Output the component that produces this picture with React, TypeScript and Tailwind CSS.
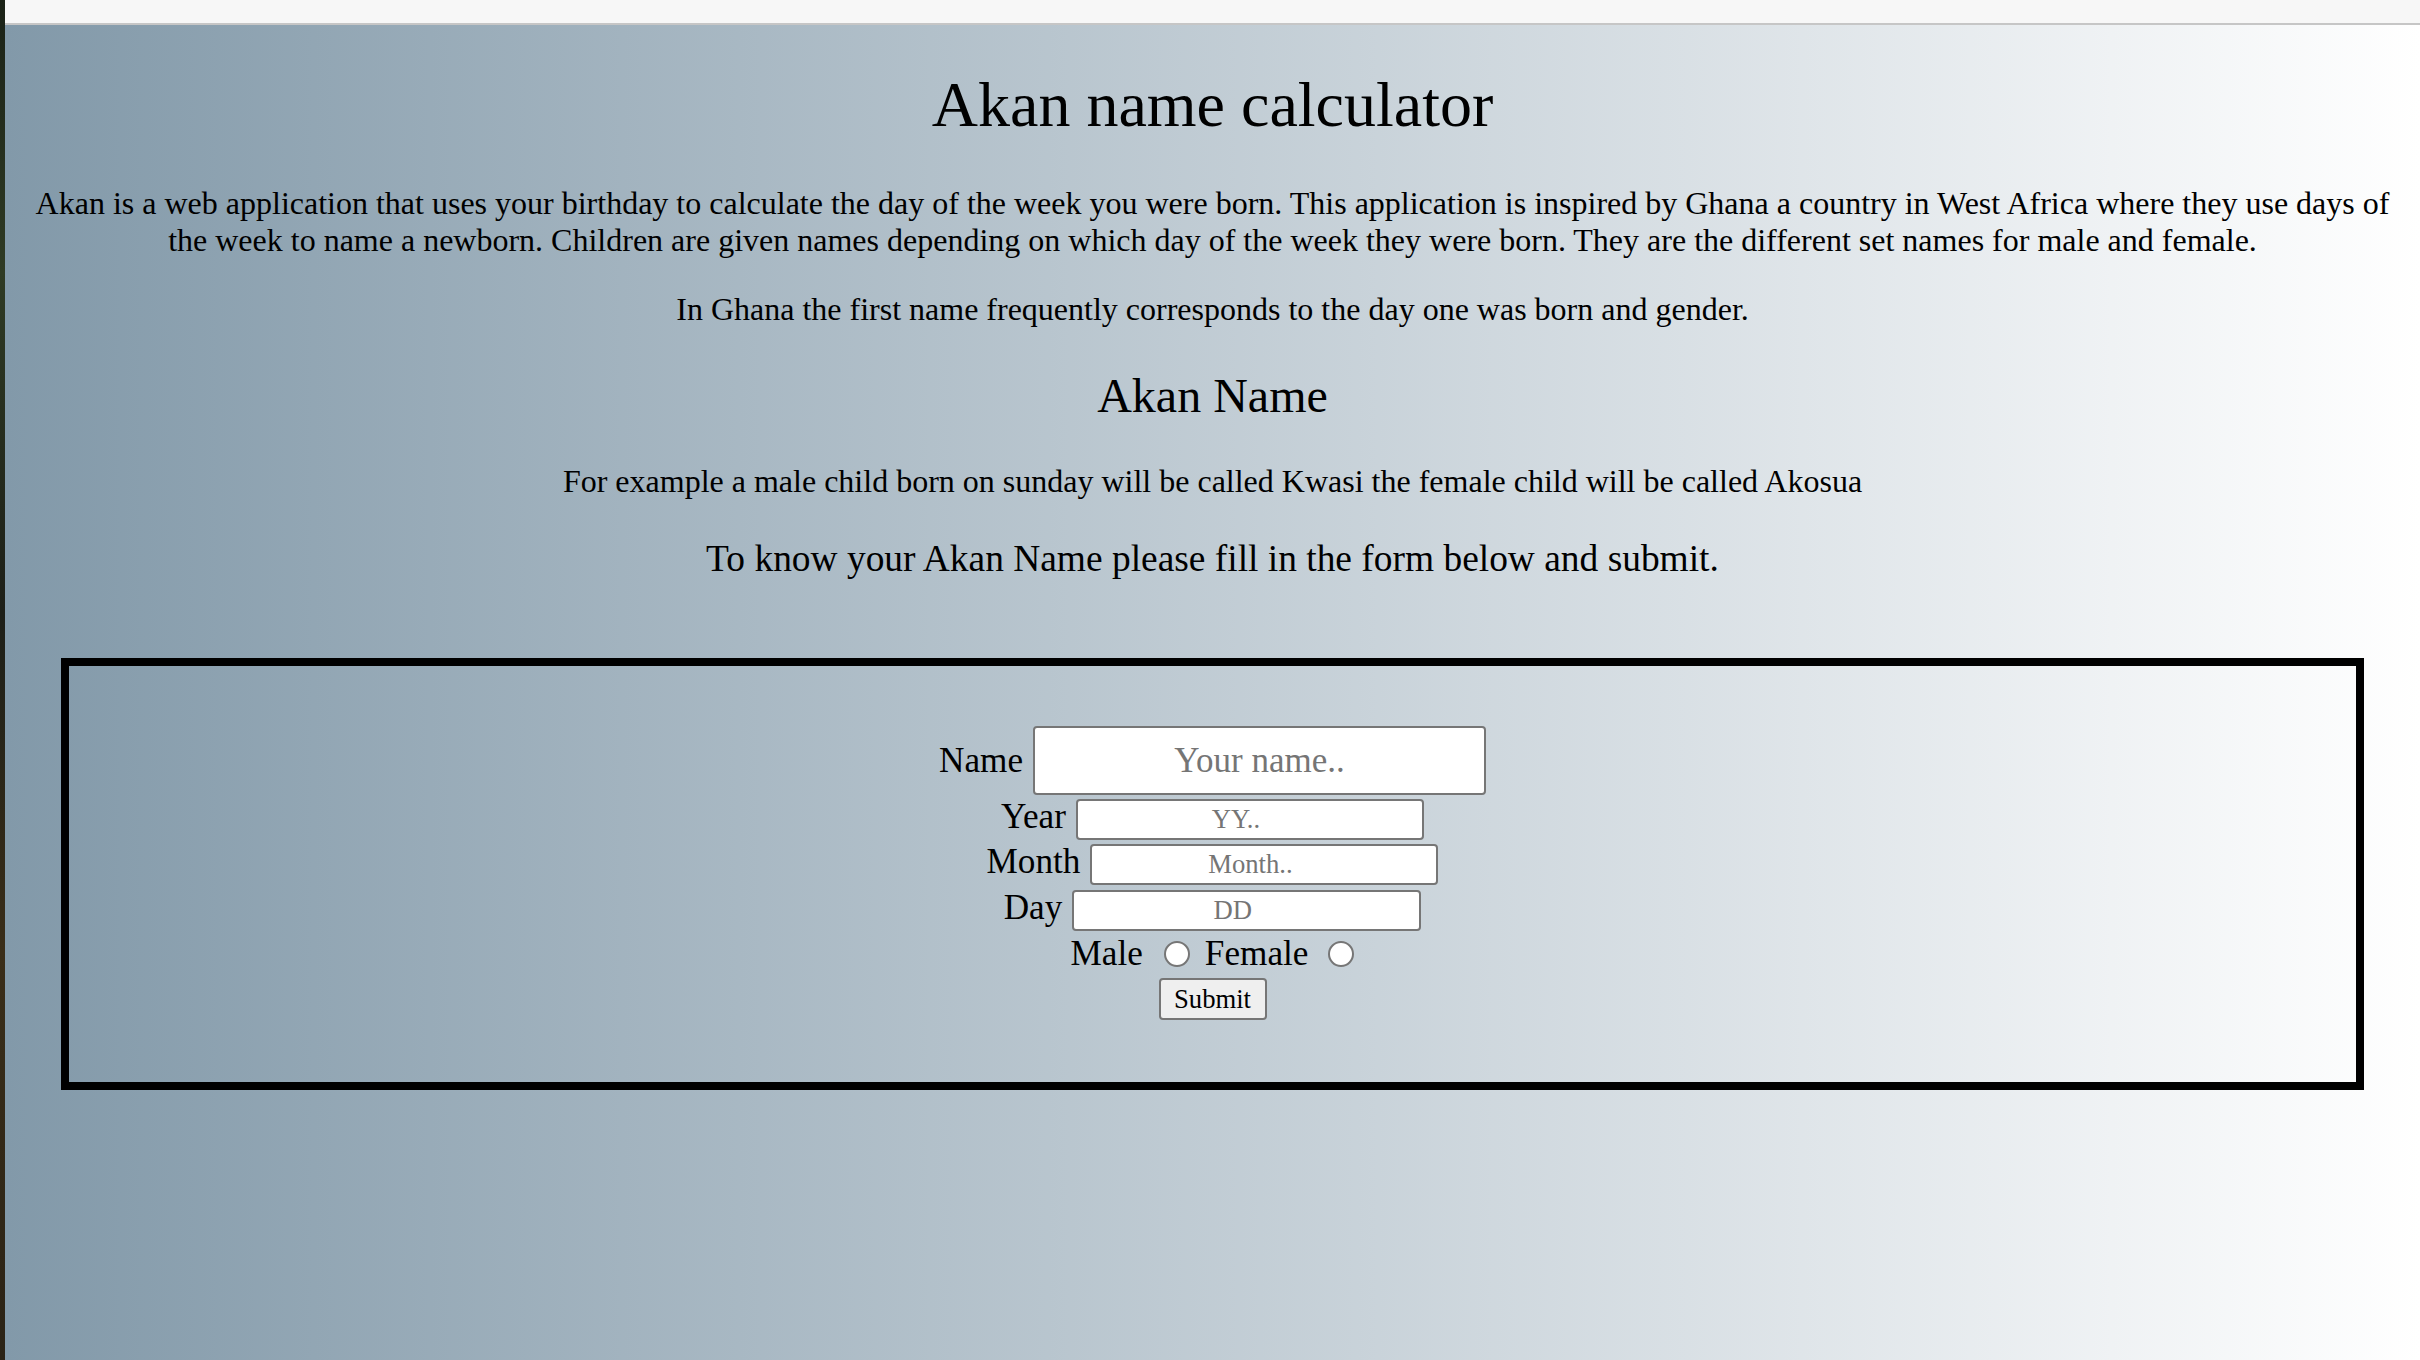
import { useState } from "react"

// Akan name calculator page
const Field = ({
  label,
  placeholder,
  className,
  mt,
}: {
  label: string
  placeholder: string
  className: string
  mt: string
}) => (
  <div className={`flex items-baseline justify-center gap-[10px] ${mt}`}>
    <label className="text-[35.2px] leading-[normal]">{label}</label>
    <input
      type="text"
      placeholder={placeholder}
      className={`rounded-[4px] border-2 border-[#767676] bg-white text-center text-black outline-none placeholder:text-[#757575] ${className}`}
    />
  </div>
)

export default function App() {
  const [gender, setGender] = useState("")

  return (
    <div className="flex h-[1360px] w-[2420px] overflow-hidden font-['Liberation_Serif',serif] text-black">
      {/* desktop edge */}
      <div className="h-full w-[5px] shrink-0 bg-[linear-gradient(to_bottom,#1b2217,#2f3b24_20%,#1d1f18_45%,#3a2e19_70%,#2b2316)]" />

      <div className="flex min-w-0 flex-1 flex-col">
        {/* browser chrome strip */}
        <div className="h-[25px] shrink-0 border-b-2 border-[#c6c6c6] bg-[#f7f7f7]" />

        <main className="flex-1 bg-[linear-gradient(to_right,#8299a9,#ffffff)] text-center">
          <div className="px-[16px]">
            <h1 className="mt-[43px] text-[64px] font-normal leading-[normal]">Akan name calculator</h1>
            <p className="mt-[43px] text-[32px] leading-[normal]">
              Akan is a web application that uses your birthday to calculate the day of the week you were born. This
              application is inspired by Ghana a country in West Africa where they use days of the week to name a
              newborn. Children are given names depending on which day of the week they were born. They are the
              different set names for male and female.
            </p>
            <p className="mt-[32px] text-[32px] leading-[normal]">
              In Ghana the first name frequently corresponds to the day one was born and gender.
            </p>
            <h2 className="mt-[40px] text-[48px] font-normal leading-[normal]">Akan Name</h2>
            <p className="mt-[40px] text-[32px] leading-[normal]">
              For example a male child born on sunday will be called Kwasi the female child will be called Akosua
            </p>
            <h3 className="mt-[37px] text-[37.44px] font-normal leading-[normal]">
              To know your Akan Name please fill in the form below and submit.
            </h3>
          </div>

          {/* form box */}
          <form
            onSubmit={(e) => e.preventDefault()}
            className="mx-[56px] mt-[78px] h-[432px] border-[8px] border-black pt-[60px]"
          >
            <Field label="Name" placeholder="Your name.." className="h-[69px] w-[453px] px-[4px] text-[35px]" mt="" />
            <Field label="Year" placeholder="YY.." className="h-[41px] w-[348px] pl-[4px] pr-[32px] text-[26.67px]" mt="mt-[2px]" />
            <Field label="Month" placeholder="Month.." className="h-[41px] w-[348px] pl-[4px] pr-[32px] text-[26.67px]" mt="mt-[2px]" />
            <Field label="Day" placeholder="DD" className="h-[41px] w-[349px] pl-[4px] pr-[32px] text-[26.67px]" mt="mt-[3px]" />

            <div className="mt-[3px] flex items-baseline justify-center text-[35.2px] leading-[normal]">
              <span>Male</span>
              <input
                type="radio"
                name="gender"
                checked={gender === "male"}
                onChange={() => setGender("male")}
                className="ml-[21px] h-[26px] w-[26px] translate-y-[2px] appearance-none rounded-full border-2 border-[#767676] bg-white checked:border-[8px] checked:border-[#1a73e8]"
              />
              <span className="ml-[15px]">Female</span>
              <input
                type="radio"
                name="gender"
                checked={gender === "female"}
                onChange={() => setGender("female")}
                className="ml-[20px] h-[26px] w-[26px] translate-y-[2px] appearance-none rounded-full border-2 border-[#767676] bg-white checked:border-[8px] checked:border-[#1a73e8]"
              />
            </div>

            <div className="mt-[4px] flex justify-center">
              <button
                type="submit"
                className="h-[42px] w-[108px] rounded-[4px] border-2 border-[#767676] bg-[#efefef] text-[26.67px] leading-[normal]"
              >
                Submit
              </button>
            </div>
          </form>
        </main>
      </div>
    </div>
  )
}
